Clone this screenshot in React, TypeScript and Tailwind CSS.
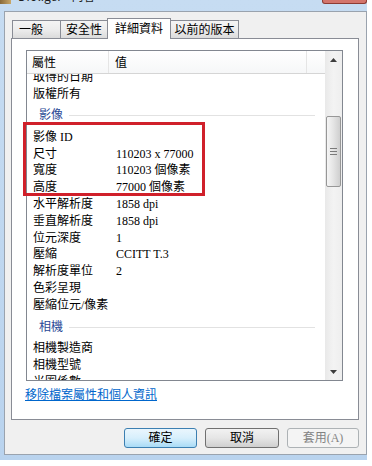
import React from "react";

const FONT = "font-['Liberation_Serif','Noto_Sans_CJK_TC',serif]";

function Row({ k, v }: { k: string; v?: string }) {
  return (
    <div className="h-[16.8px] flex items-center text-[12px] leading-[14px] text-black whitespace-nowrap">
      <div className="w-[82px] pl-[6px] shrink-0">{k}</div>
      <div className="pl-[7px]">{v ?? ""}</div>
    </div>
  );
}

function Group({ label }: { label: string }) {
  return (
    <div className="h-[26.5px] flex items-center pl-[12px] pr-[10px]">
      <span className="text-[12px] leading-[14px] text-[#2b4a96]">{label}</span>
      <div className="flex-1 h-px bg-[#e2e2e2] ml-[6px] mt-[1px]" />
    </div>
  );
}

function Tab({ label, w, selected, first }: { label: string; w: string; selected?: boolean; first?: boolean }) {
  if (selected) {
    return (
      <div className={`relative z-10 -ml-px h-[21px] ${w} bg-white border-l border-t border-r border-[#898c95] flex items-start justify-center pt-[2px] text-[12px] leading-[16px]`}>
        {label}
      </div>
    );
  }
  return (
    <div
      className={`${first ? "" : "-ml-px"} h-[19px] ${w} self-end border-l border-t border-r border-[#898c95] bg-gradient-to-b from-[#f4f4f4] via-[#ececec] to-[#d9d9d9] flex items-center ${first ? "justify-start pl-[6px]" : "justify-center"} text-[12px] leading-[16px]`}
    >
      {label}
    </div>
  );
}

function Button({ label, kind }: { label: string; kind: "default" | "normal" | "disabled" }) {
  const cls =
    kind === "default"
      ? "border-[#3c7fb1] bg-gradient-to-b from-[#eaf6fd] via-[#d7effc] to-[#a9dbf6] text-black"
      : kind === "normal"
      ? "border-[#707070] bg-gradient-to-b from-[#f2f2f2] via-[#e6e6e6] to-[#cfcfcf] text-black"
      : "border-[#adb2b5] bg-[#f4f4f4] text-[#838383]";
  return <div className={`h-[20px] rounded-[3px] border flex items-center justify-center text-[12px] leading-[14px] ${cls}`}>{label}</div>;
}

export default function App() {
  return (
    <div className={`relative w-[372px] h-[466px] bg-white overflow-hidden ${FONT}`}>
      <div className="w-[367px] h-[460px] bg-gradient-to-b from-[#c6dcf2] to-[#b9d3ee] flex flex-col">
        {/* title bar */}
        <div className="h-[11px] flex items-start overflow-hidden shrink-0">
          <div className="w-[11px] h-[4px] bg-gradient-to-r from-[#8a6a3a] to-[#c9a86a] shrink-0" />
          <div className="ml-[7px] -mt-[11px] text-[12px] leading-[14px] text-[#1e1e1e] font-['Noto_Sans_CJK_TC','Liberation_Sans',sans-serif] whitespace-nowrap">
            Dfoliger - 內容
          </div>
          <div className="flex-1" />
          <div className="w-[45px] h-[4px] border-b border-l border-r border-[#8d3b33] bg-[#d3756c] rounded-b-[3px]" />
        </div>
        {/* client */}
        <div className="ml-[4px] w-[363px] h-[444px] bg-[#f0f0f0] border border-[#9aa3ae] flex flex-col">
          {/* tabs */}
          <div className="mt-[6px] ml-[7px] h-[21px] flex items-end">
            <Tab label="一般" w="w-[49px]" first />
            <Tab label="安全性" w="w-[48px]" />
            <Tab label="詳細資料" w="w-[64px]" selected />
            <Tab label="以前的版本" w="w-[69px]" />
          </div>
          {/* panel */}
          <div className="-mt-px ml-[6px] w-[348px] h-[382px] bg-white border border-[#898c95] pl-[14px] pt-[11px] flex flex-col">
            <div className="w-[317px] h-[331px] border border-[#828790] flex">
              <div className="flex-1 flex flex-col min-w-0">
                {/* header */}
                <div className="h-[23px] shrink-0 flex bg-gradient-to-b from-white to-[#f6f7f8] border-b border-[#d5d5d5] text-[12px] leading-[14px]">
                  <div className="w-[82px] pl-[5px] pt-[2px] border-r border-[#e5e5e5] flex items-center">屬性</div>
                  <div className="w-[198px] pl-[6px] pt-[2px] border-r border-[#e5e5e5] flex items-center">值</div>
                  <div className="flex-1" />
                </div>
                {/* rows */}
                <div className="flex-1 overflow-hidden">
                  <div className="-mt-[5.6px]">
                    <Row k="取得的日期" />
                    <Row k="版權所有" />
                    <Group label="影像" />
                    <Row k="影像 ID" />
                    <Row k="尺寸" v="110203 x 77000" />
                    <Row k="寬度" v="110203 個像素" />
                    <Row k="高度" v="77000 個像素" />
                    <Row k="水平解析度" v="1858 dpi" />
                    <Row k="垂直解析度" v="1858 dpi" />
                    <Row k="位元深度" v="1" />
                    <Row k="壓縮" v="CCITT T.3" />
                    <Row k="解析度單位" v="2" />
                    <Row k="色彩呈現" />
                    <Row k="壓縮位元/像素" />
                    <Group label="相機" />
                    <Row k="相機製造商" />
                    <Row k="相機型號" />
                    <Row k="光圈係數" />
                  </div>
                </div>
              </div>
              {/* scrollbar */}
              <div className="w-[17px] shrink-0 bg-gradient-to-r from-[#e9e9e9] via-[#f3f3f3] to-[#eeeeee] flex flex-col">
                <div className="h-[17px] flex items-center justify-center">
                  <svg width="7" height="4" viewBox="0 0 7 4"><path d="M3.5 0 L7 4 L0 4 Z" fill="#3d3d3d" /></svg>
                </div>
                <div className="h-[48px]" />
                <div className="mx-px h-[71px] rounded-[2px] border border-[#979797] bg-gradient-to-r from-[#f6f6f6] via-[#e4e4e4] to-[#cfcfcf] flex flex-col items-center justify-center gap-[2px]">
                  <div className="w-[7px] h-px bg-[#7a7a7a]" />
                  <div className="w-[7px] h-px bg-[#7a7a7a]" />
                  <div className="w-[7px] h-px bg-[#7a7a7a]" />
                </div>
                <div className="flex-1" />
                <div className="h-[17px] flex items-center justify-center">
                  <svg width="7" height="4" viewBox="0 0 7 4"><path d="M0 0 L7 0 L3.5 4 Z" fill="#3d3d3d" /></svg>
                </div>
              </div>
            </div>
            <div className="mt-[6px] -ml-px text-[12px] leading-[16px] text-[#0066cc] underline whitespace-nowrap">
              移除檔案屬性和個人資訊
            </div>
          </div>
          {/* buttons */}
          <div className="mt-[8px] pr-[7px] flex justify-end gap-[8px]">
            <div className="w-[73px]"><Button label="確定" kind="default" /></div>
            <div className="w-[74px]"><Button label="取消" kind="normal" /></div>
            <div className="w-[72px]"><Button label="套用(A)" kind="disabled" /></div>
          </div>
        </div>
      </div>
      {/* annotation */}
      <div className="absolute left-[23px] top-[122px] w-[182px] h-[74px] border-[3px] border-[#d0202a]" />
    </div>
  );
}
